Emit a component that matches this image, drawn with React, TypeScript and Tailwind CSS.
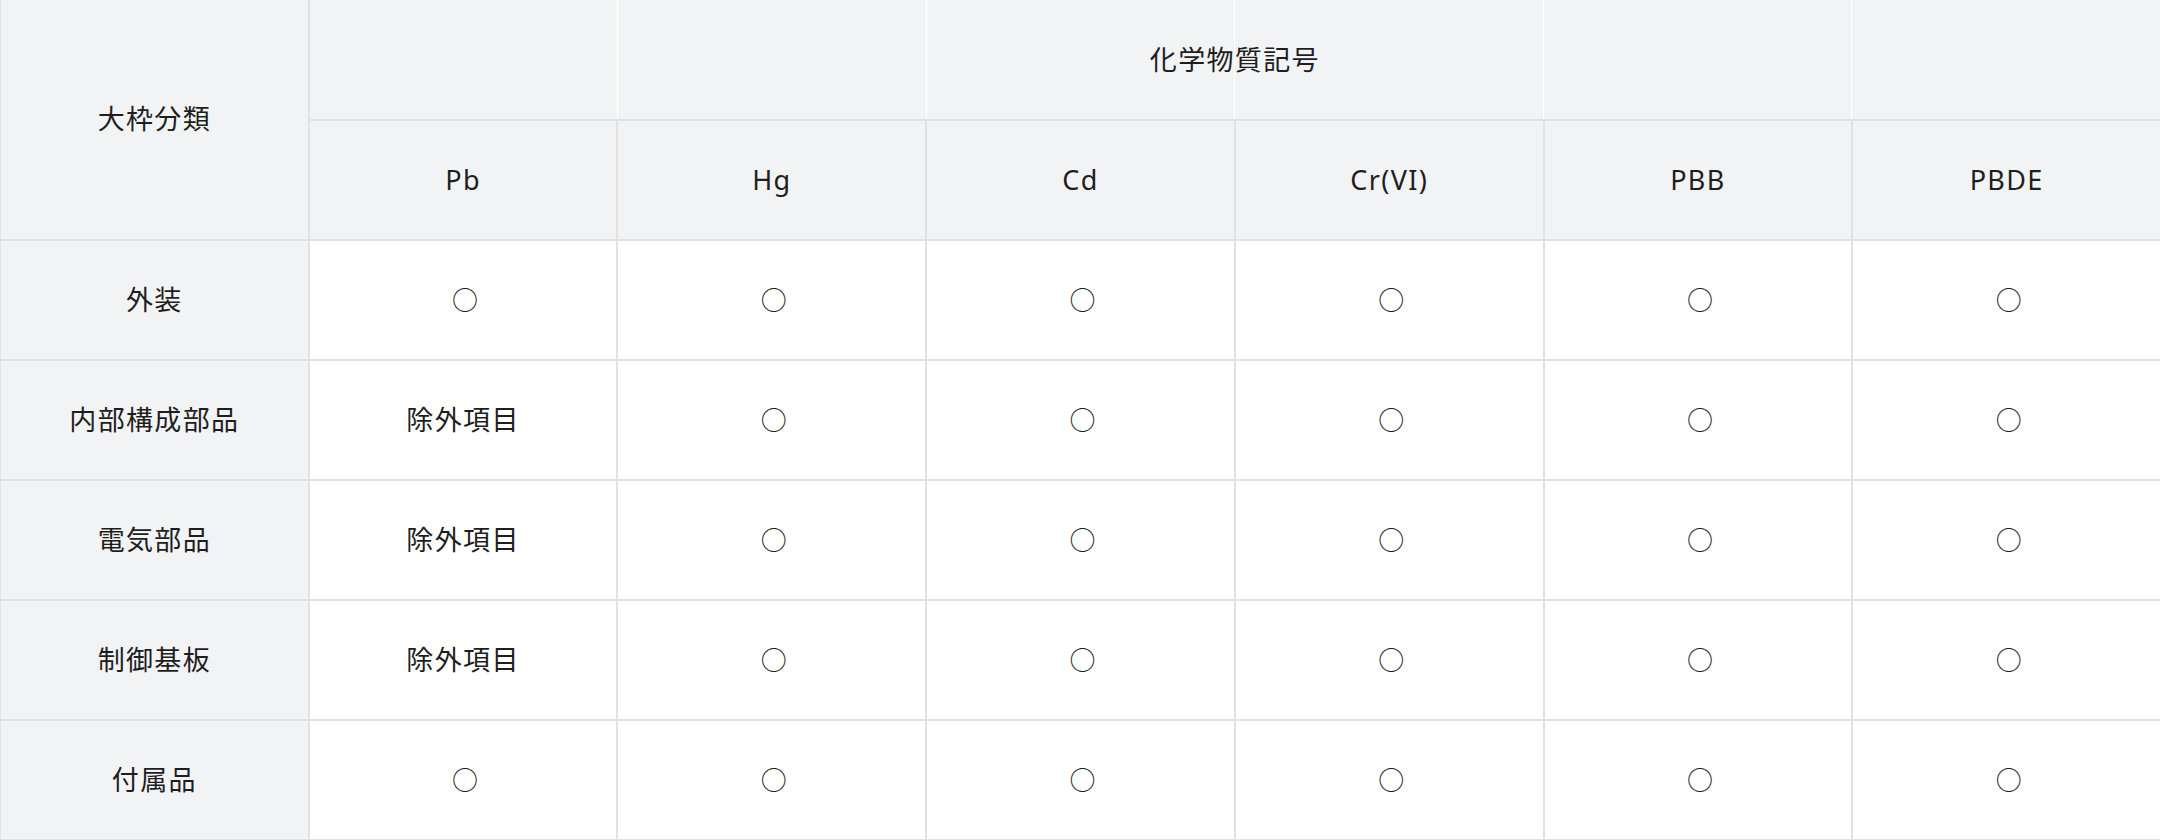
const ELEMENTS = ["Pb", "Hg", "Cd", "Cr(VI)", "PBB", "PBDE"];

const ROWS: { label: string; values: string[] }[] = [
  { label: "外装", values: ["○", "○", "○", "○", "○", "○"] },
  { label: "内部構成部品", values: ["除外項目", "○", "○", "○", "○", "○"] },
  { label: "電気部品", values: ["除外項目", "○", "○", "○", "○", "○"] },
  { label: "制御基板", values: ["除外項目", "○", "○", "○", "○", "○"] },
  { label: "付属品", values: ["○", "○", "○", "○", "○", "○"] },
];

const cell = "flex items-center justify-center border border-[#e1e1e1]";
const head = `${cell} bg-[#f2f3f5]`;

function Value({ v }: { v: string }) {
  if (v === "○") {
    return (
      <span
        className="pb-[4px] pl-[4px] text-[26px] tracking-normal"
        style={{ fontFamily: '"Noto Sans CJK JP", sans-serif' }}
      >
        ○
      </span>
    );
  }
  return <span>{v}</span>;
}

export default function App() {
  return (
    <div
      className="w-[2160px] h-[840px] overflow-hidden bg-white text-[27px] tracking-[0.05em] text-[#1e1e1e]"
      style={{ fontFamily: '"Noto Sans", "Noto Sans CJK JP", sans-serif' }}
    >
      <div className="-mt-px grid w-[2161px] grid-cols-7 grid-rows-[121px_repeat(6,120px)]">
        <div className={`${head} row-span-2`}>大枠分類</div>

        <div className="col-span-6 grid grid-cols-1 grid-rows-1 border border-[#e1e1e1]">
          <div className="col-start-1 row-start-1 grid grid-cols-6 gap-px bg-white">
            {ELEMENTS.map((e) => (
              <div key={e} className="bg-[#f2f3f5]" />
            ))}
          </div>
          <div className="col-start-1 row-start-1 flex items-center justify-center pt-px">
            化学物質記号
          </div>
        </div>

        {ELEMENTS.map((e) => (
          <div key={e} className={head}>
            {e}
          </div>
        ))}

        {ROWS.map((row) => (
          <>
            <div key={row.label} className={head}>
              {row.label}
            </div>
            {row.values.map((v, i) => (
              <div key={`${row.label}-${i}`} className={cell}>
                <Value v={v} />
              </div>
            ))}
          </>
        ))}
      </div>
    </div>
  );
}
